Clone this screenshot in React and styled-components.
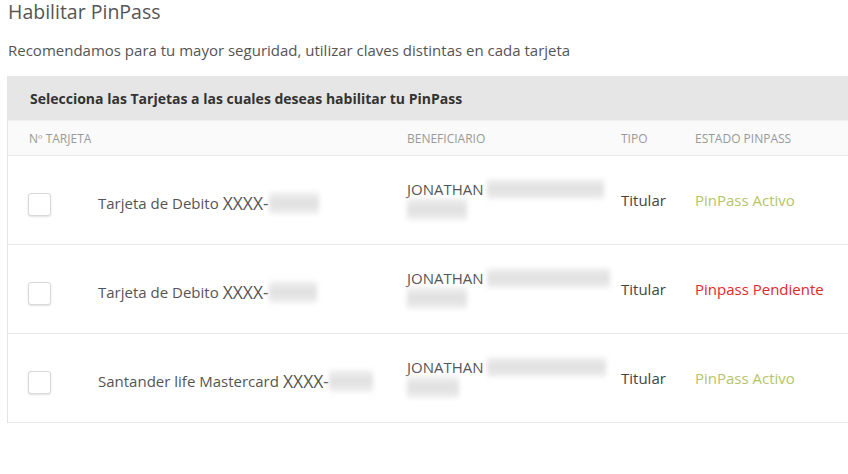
import React from "react";
import styled, { createGlobalStyle } from "styled-components";

const Global = createGlobalStyle`
  html, body { margin: 0; padding: 0; background: #fff; overflow: hidden; }
  body { font-family: "Open Sans", "Liberation Sans", sans-serif; color: #555; }
`;

const Page = styled.div`
  width: 848px;
  height: 474px;
  padding: 1px 0 0 7px;
  box-sizing: border-box;
  overflow: hidden;
`;

const Title = styled.h1`
  margin: 0;
  padding: 0 0 0 1px;
  font-size: 19.5px;
  font-weight: 400;
  line-height: 22px;
  color: #555;
`;

const Lead = styled.p`
  margin: 15px 0 0;
  padding-left: 1px;
  font-size: 15px;
  line-height: 24px;
  color: #555;
`;

const Table = styled.div`
  margin-top: 14px;
  width: 880px;
  border-left: 1px solid #e4e4e4;
`;

const Banner = styled.div`
  height: 44px;
  display: flex;
  align-items: center;
  padding-left: 22px;
  background: #e6e6e6;
  font-size: 14px;
  font-weight: 700;
  color: #333;
`;

const Grid = styled.div`
  display: grid;
  grid-template-columns: 90px 309px 214px 74px 1fr;
  align-items: center;
  border-bottom: 1px solid #e9e9e9;
  height: ${(p) => p.$h}px;
  box-sizing: border-box;
  background: ${(p) => p.$bg || "#fff"};
  border-top: ${(p) => (p.$top ? "1px solid #f1f1f1" : "none")};
`;

const HeadCell = styled.div`
  font-size: 12px;
  color: #999;
  text-transform: uppercase;
  grid-column: ${(p) => p.$span || "auto"};
  padding-left: ${(p) => p.$pl || 0}px;
`;

const CheckCell = styled.div`
  padding-left: 20px;
  padding-top: 8px;
`;

const Check = styled.span`
  display: block;
  width: 21px;
  height: 21px;
  border: 1px solid #d8d8d8;
  border-radius: 3px;
  box-shadow: 0 1px 2px rgba(0, 0, 0, 0.12);
  background: #fff;
`;

const CardText = styled.div`
  display: flex;
  align-items: center;
  padding-top: 6px;
  font-size: 15px;
  color: #555;
  white-space: nowrap;
`;

const Mask = styled.span`
  font-size: 17.5px;
  margin-left: 4px;
`;

const Redacted = styled.span`
  display: inline-block;
  flex: none;
  width: ${(p) => p.$w}px;
  height: ${(p) => p.$h}px;
  background: linear-gradient(180deg, #f1f1f1 0%, #dfdfdf 50%, #efefef 100%);
  filter: blur(2.5px);
  vertical-align: middle;
`;

const Beneficiary = styled.div`
  display: flex;
  flex-direction: column;
  font-size: 15px;
  color: #555;
  margin-top: -2px;
`;

const NameLine = styled.div`
  display: flex;
  align-items: center;
  height: 20px;
  gap: 3px;
`;

const Tipo = styled.div`
  font-size: 15px;
  color: #444;
`;

const Estado = styled.div`
  font-size: 15px;
  color: ${(p) => (p.$ok ? "#b6c46a" : "#e3272e")};
`;

const rows = [
  { card: "Tarjeta de Debito", maskW: 50, nameW: 117, name2W: 60, status: "PinPass Activo", ok: true },
  { card: "Tarjeta de Debito", maskW: 48, nameW: 123, name2W: 60, status: "Pinpass Pendiente", ok: false },
  { card: "Santander life Mastercard", maskW: 44, nameW: 119, name2W: 52, status: "PinPass Activo", ok: true },
];

export default function App() {
  return (
    <>
      <Global />
      <Page>
        <Title>Habilitar PinPass</Title>
        <Lead>Recomendamos para tu mayor seguridad, utilizar claves distintas en cada tarjeta</Lead>
        <Table>
          <Banner>Selecciona las Tarjetas a las cuales deseas habilitar tu PinPass</Banner>
          <Grid $h={36} $bg="#fafafa" $top>
            <HeadCell $span="1 / 3" $pl={21}>Nº Tarjeta</HeadCell>
            <HeadCell>Beneficiario</HeadCell>
            <HeadCell>Tipo</HeadCell>
            <HeadCell>Estado PinPass</HeadCell>
          </Grid>
          {rows.map((r, i) => (
            <Grid key={i} $h={89}>
              <CheckCell>
                <Check />
              </CheckCell>
              <CardText>
                {r.card}
                <Mask>XXXX-</Mask>
                <Redacted $w={r.maskW} $h={22} />
              </CardText>
              <Beneficiary>
                <NameLine>
                  JONATHAN <Redacted $w={r.nameW} $h={20} />
                </NameLine>
                <NameLine>
                  <Redacted $w={r.name2W} $h={22} />
                </NameLine>
              </Beneficiary>
              <Tipo>Titular</Tipo>
              <Estado $ok={r.ok}>{r.status}</Estado>
            </Grid>
          ))}
        </Table>
      </Page>
    </>
  );
}
